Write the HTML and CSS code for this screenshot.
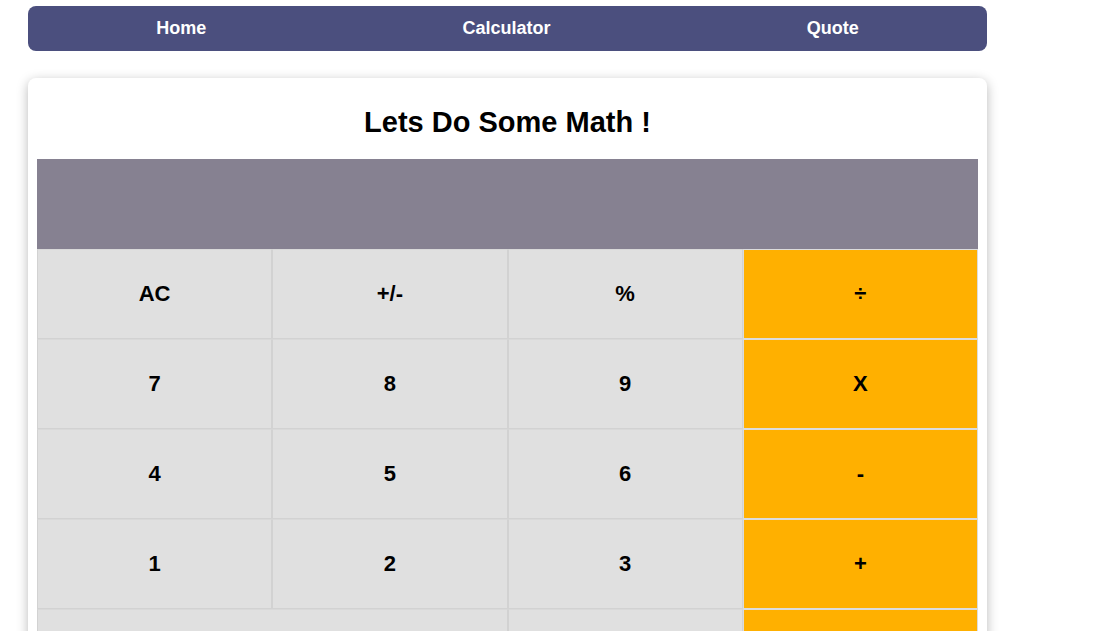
FILE: index.html
```html
<!DOCTYPE html>
<html lang="en">
<head>
<meta charset="utf-8">
<title>Math Magicians</title>
<link rel="stylesheet" href="styles.css">
</head>
<body>
<div class="page">
  <nav class="nav">
    <a class="nav-link" href="#">Home</a>
    <a class="nav-link" href="#">Calculator</a>
    <a class="nav-link" href="#">Quote</a>
  </nav>
  <main class="card">
    <h1 class="title">Lets Do Some Math !</h1>
    <div class="calc">
      <div class="display"></div>
      <button class="key">AC</button>
      <button class="key">+/-</button>
      <button class="key">%</button>
      <button class="key op">÷</button>
      <button class="key">7</button>
      <button class="key">8</button>
      <button class="key">9</button>
      <button class="key op">X</button>
      <button class="key">4</button>
      <button class="key">5</button>
      <button class="key">6</button>
      <button class="key op">-</button>
      <button class="key">1</button>
      <button class="key">2</button>
      <button class="key">3</button>
      <button class="key op">+</button>
      <button class="key wide">0</button>
      <button class="key">.</button>
      <button class="key op">=</button>
    </div>
  </main>
</div>
</body>
</html>
```
FILE: styles.css
```css
* { box-sizing: border-box; }
html, body { margin: 0; padding: 0; background: #fff; }
body { font-family: "Liberation Sans", Arial, sans-serif; color: #000; }
.page {
  width: 959px;
  margin-left: 28px;
  padding-top: 6px;
}
.nav {
  height: 45px;
  background: #4b4f7e;
  border-radius: 8px;
  display: flex;
  align-items: center;
  justify-content: space-around;
  padding-bottom: 2px;
}
.nav-link {
  color: #fff;
  text-decoration: none;
  font-weight: bold;
  font-size: 18px;
  line-height: 22px;
}
.card {
  margin-top: 27px;
  background: #fff;
  border-radius: 8px;
  box-shadow: 0 3px 12px rgba(0, 0, 0, 0.28);
  padding: 9px 9px 20px;
}
.title {
  margin: 19px 0 21px;
  font-size: 29px;
  line-height: 32px;
  font-weight: bold;
  text-align: center;
}
.calc {
  display: grid;
  grid-template-columns: repeat(4, 1fr);
  grid-auto-rows: 90px;
}
.display {
  grid-column: 1 / -1;
  background: #868191;
}
.key {
  font-family: "Liberation Sans", Arial, sans-serif;
  font-size: 22px;
  font-weight: bold;
  color: #000;
  background: #e0e0e0;
  border: 1px solid #d2d2d2;
  border-top-color: #d9d9d9;
  margin: 0;
  padding: 0;
}
.key.op {
  background: #ffb000;
  border-color: #dcdcdc;
}
.key.wide { grid-column: span 2; }
```
